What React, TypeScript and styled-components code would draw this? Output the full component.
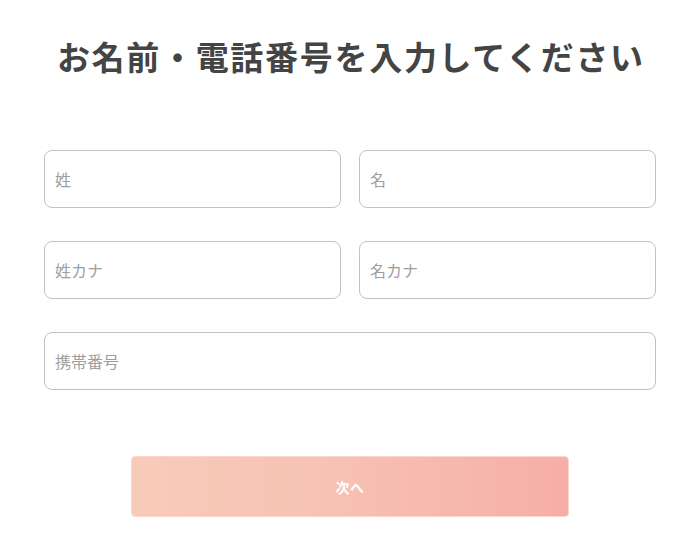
import styled, { createGlobalStyle } from "styled-components";

const GlobalStyle = createGlobalStyle`
  * {
    box-sizing: border-box;
  }
  body {
    margin: 0;
    background: #ffffff;
    font-family: "Noto Sans CJK JP", "Noto Sans", sans-serif;
  }
`;

interface FieldProps {
  placeholder: string;
  wide?: boolean;
}

function Field({ placeholder, wide }: FieldProps) {
  return <St.Input type="text" placeholder={placeholder} $wide={wide} />;
}

export default function App() {
  return (
    <>
      <GlobalStyle />
      <St.Page>
        <St.Title>お名前・電話番号を入力してください</St.Title>
        <St.Form>
          <Field placeholder="姓" />
          <Field placeholder="名" />
          <Field placeholder="姓カナ" />
          <Field placeholder="名カナ" />
          <Field placeholder="携帯番号" wide />
        </St.Form>
        <St.NextBtn type="button">次へ</St.NextBtn>
      </St.Page>
    </>
  );
}

const St = {
  Page: styled.main`
    width: 612px;
    margin: 0 auto;
    padding-top: 35px;
    display: flex;
    flex-direction: column;
    align-items: center;
  `,
  Title: styled.h1`
    margin: 0;
    font-size: 33px;
    line-height: 42px;
    font-weight: 700;
    letter-spacing: 1.7px;
    margin-right: -1.7px;
    color: #444444;
    white-space: nowrap;
  `,
  Form: styled.div`
    width: 100%;
    margin-top: 73px;
    display: grid;
    grid-template-columns: 1fr 1fr;
    column-gap: 18px;
    row-gap: 33px;
  `,
  Input: styled.input<{ $wide?: boolean }>`
    grid-column: ${({ $wide }) => ($wide ? "1 / -1" : "auto")};
    height: 58px;
    width: 100%;
    padding: 0 10px;
    border: 1px solid #c2c2c2;
    border-radius: 8px;
    background: #ffffff;
    font-family: "Noto Sans CJK JP", "Noto Sans", sans-serif;
    font-size: 16px;
    color: #333333;
    outline: none;

    &::placeholder {
      color: #9e9e9e;
    }
  `,
  NextBtn: styled.button`
    width: 438px;
    height: 61px;
    margin-top: 66px;
    border: 1px solid #fbd6cc;
    border-radius: 4px;
    background: linear-gradient(90deg, #f8cbb9 0%, #f7c2b3 45%, #f6aea6 100%);
    color: #ffffff;
    font-family: "Noto Sans CJK JP", "Noto Sans", sans-serif;
    font-size: 14px;
    font-weight: 700;
    letter-spacing: 0.5px;
    cursor: pointer;
  `,
};
